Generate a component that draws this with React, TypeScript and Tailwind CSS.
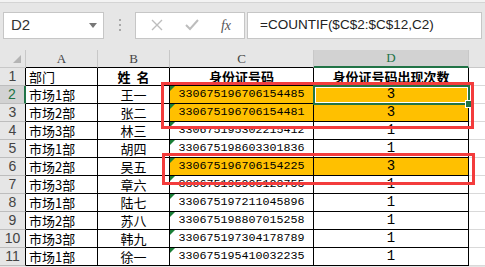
import React from 'react';

const rows = [
  ['市场1部', '王一', '330675196706154485', '3'],
  ['市场2部', '张二', '330675196706154481', '3'],
  ['市场3部', '林三', '330675195302215412', '1'],
  ['市场1部', '胡四', '330675198603301836', '1'],
  ['市场2部', '吴五', '330675196706154225', '3'],
  ['市场3部', '章六', '330675195905128755', '1'],
  ['市场1部', '陆七', '330675197211045896', '1'],
  ['市场2部', '苏八', '330675198807015258', '1'],
  ['市场3部', '韩九', '330675197304178789', '1'],
  ['市场1部', '徐一', '330675195410032235', '1'],
];

const cjk = { fontFamily: '"Noto Sans CJK SC", sans-serif' };
const mono = { fontFamily: '"Liberation Mono", monospace' };

const App = () => {
  return (
    <div className="w-[485px] h-[267px] overflow-hidden bg-[#e6e6e6] relative" style={{ fontFamily: '"Liberation Sans", sans-serif' }}>
      {/* formula bar */}
      <div className="h-[3px] bg-[#f3f3f3] border-b border-[#d4d4d4]"></div>
      <div className="flex items-center h-[47px] pt-[7px] pb-[10px] pl-[3px] pr-[3px]">
        <div className="w-[101px] h-[27px] bg-white border border-[#c6c6c6] flex items-center justify-between pl-[7px] pr-[6px]">
          <span className="text-[15px] text-[#333]">D2</span>
          <span className="w-0 h-0 border-l-[4px] border-r-[4px] border-t-[5px] border-l-transparent border-r-transparent border-t-[#777]"></span>
        </div>
        <div className="w-[31px] flex flex-col items-center gap-[3px]">
          <span className="w-[2px] h-[2px] bg-[#a8a8a8]"></span>
          <span className="w-[2px] h-[2px] bg-[#a8a8a8]"></span>
          <span className="w-[2px] h-[2px] bg-[#a8a8a8]"></span>
        </div>
        <div className="flex-1 h-[27px] flex">
          <div className="w-[110px] bg-white border border-[#c6c6c6] flex items-center justify-around pl-[4px] pr-[2px]">
            <svg width="12" height="12" viewBox="0 0 12 12">
              <path d="M1 1L11 11M11 1L1 11" stroke="#bdbdbd" strokeWidth="1.4" />
            </svg>
            <svg width="14" height="12" viewBox="0 0 14 12">
              <path d="M1 6L5 10L13 1" stroke="#bdbdbd" strokeWidth="2" fill="none" />
            </svg>
            <span className="italic text-[14px] text-[#555]" style={{ fontFamily: '"Liberation Serif", serif' }}>fx</span>
          </div>
          <div className="flex-1 ml-[2px] bg-white border border-[#c6c6c6] flex items-center pl-[12px]">
            <span className="text-[13.5px] text-[#222]">=COUNTIF($C$2:$C$12,C2)</span>
          </div>
        </div>
      </div>

      {/* sheet grid */}
      <div className="grid grid-cols-[26px_72px_72px_144px_155px_16px] auto-rows-[18px] bg-white">
        <div className="bg-[#e6e6e6] border-r border-b border-[#c8c8c8] relative">
          <span className="absolute right-[4px] bottom-[4px] w-0 h-0 border-l-[8px] border-t-[8px] border-l-transparent border-t-transparent border-b-0 border-r-0" style={{ borderBottom: '8px solid #b4b4b4', borderLeft: '8px solid transparent', borderTop: 0 }}></span>
        </div>
        {['A', 'B', 'C'].map((c) => (
          <div key={c} className="bg-[#e6e6e6] border-r border-[#c8c8c8] border-b border-b-black flex items-center justify-center text-[13px] text-[#444]" style={{ fontFamily: '"Liberation Serif", serif' }}>
            {c}
          </div>
        ))}
        <div className="bg-[#d2d2d2] border-r border-[#c8c8c8] border-b-2 border-b-[#217346] flex items-center justify-center text-[13px] text-[#217346]" style={{ fontFamily: '"Liberation Serif", serif' }}>
          D
        </div>
        <div className="bg-[#e6e6e6] border-b border-[#c8c8c8]"></div>

        {/* row 1 */}
        <div className="bg-[#e6e6e6] border-r border-r-black border-b border-b-[#bdbdbd] flex items-center justify-center text-[14px] text-[#444]">1</div>
        <div className="border-r border-b border-black flex items-center pl-[3px] text-[13px] text-black" style={cjk}>部门</div>
        <div className="border-r border-b border-black flex items-center justify-center text-[13px] font-bold text-black" style={cjk}>姓&nbsp;&nbsp;名</div>
        <div className="border-r border-b border-black flex items-center justify-center text-[13px] font-bold text-black" style={cjk}>身份证号码</div>
        <div className="border-r border-b border-black flex items-center justify-center text-[13px] font-bold text-black" style={cjk}>身份证号码出现次数</div>
        <div className="border-b border-[#d9d9d9]"></div>

        {rows.map((r, i) => {
          const n = i + 2;
          const hl = r[3] === '3';
          return (
            <React.Fragment key={n}>
              <div
                className={
                  n === 2
                    ? 'bg-[#d2d2d2] border-r-2 border-r-[#217346] border-b border-b-[#bdbdbd] flex items-center justify-center text-[14px] text-[#217346]'
                    : 'bg-[#e6e6e6] border-r border-r-black border-b border-b-[#bdbdbd] flex items-center justify-center text-[14px] text-[#444]'
                }
              >
                {n}
              </div>
              <div className="border-r border-b border-black flex items-center pl-[3px] text-[13px] text-black" style={cjk}>{r[0]}</div>
              <div className="border-r border-b border-black flex items-center justify-center text-[13px] text-black" style={cjk}>{r[1]}</div>
              <div className={`${hl ? 'bg-[#ffc000]' : 'bg-white'} border-r border-b border-black flex items-center justify-center text-[11.7px] text-black relative`} style={mono}>
                <span className="absolute left-0 top-0 w-0 h-0 border-t-[5px] border-r-[5px] border-t-[#1a7f37] border-r-transparent"></span>
                {r[2]}
              </div>
              <div className={`${hl ? 'bg-[#ffc000]' : 'bg-white'} border-r border-b border-black flex items-center justify-center text-[14px] text-black`} style={mono}>
                {r[3]}
              </div>
              <div className="border-b border-[#d9d9d9]"></div>
            </React.Fragment>
          );
        })}
      </div>

      {/* selected cell D2 */}
      <div className="absolute left-[313px] top-[85px] w-[157px] h-[20px] border-2 border-[#217346] shadow-[inset_0_0_0_1px_white]"></div>
      <div className="absolute left-[466px] top-[101px] w-[6px] h-[6px] bg-[#217346] outline outline-1 outline-white"></div>

      {/* red marks */}
      <div className="absolute left-[161px] top-[82px] w-[313px] h-[47px] border-[3px] border-[#f33c3c]"></div>
      <div className="absolute left-[162px] top-[153px] w-[313px] h-[32px] border-[3px] border-[#f33c3c]"></div>
    </div>
  );
};

export default App;
